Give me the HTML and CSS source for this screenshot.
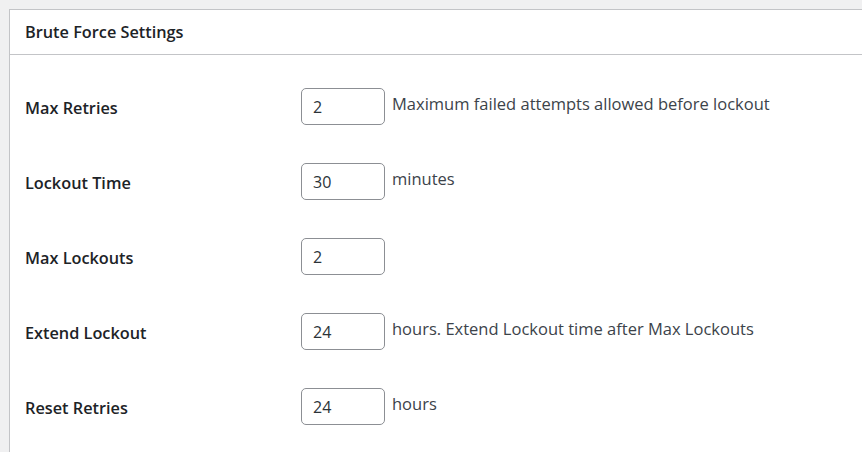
FILE: index.html
```html
<!DOCTYPE html>
<html>
<head>
<meta charset="utf-8">
<link rel="stylesheet" href="styles.css">
</head>
<body>
<div class="panel">
  <div class="panel-header"><h2 class="panel-title">Brute Force Settings</h2></div>
  <div class="panel-body">
    <div class="row">
      <label class="label">Max Retries</label>
      <div class="field"><input class="num" type="text" value="2"><span class="desc">Maximum failed attempts allowed before lockout</span></div>
    </div>
    <div class="row">
      <label class="label">Lockout Time</label>
      <div class="field"><input class="num" type="text" value="30"><span class="desc">minutes</span></div>
    </div>
    <div class="row">
      <label class="label">Max Lockouts</label>
      <div class="field"><input class="num" type="text" value="2"></div>
    </div>
    <div class="row">
      <label class="label">Extend Lockout</label>
      <div class="field"><input class="num" type="text" value="24"><span class="desc">hours. Extend Lockout time after Max Lockouts</span></div>
    </div>
    <div class="row">
      <label class="label">Reset Retries</label>
      <div class="field"><input class="num" type="text" value="24"><span class="desc">hours</span></div>
    </div>
  </div>
</div>
</body>
</html>
```
FILE: styles.css
```css
html, body {
  margin: 0;
  padding: 0;
  background: #f0f0f1;
  font-family: "Open Sans", "Noto Sans", sans-serif;
  color: #1d2327;
}
body {
  padding: 9px 0 0 9px;
  height: 452px;
  box-sizing: border-box;
  overflow: hidden;
}
.panel {
  background: #fff;
  border: 1px solid #c3c4c7;
  border-right: none;
  min-height: 460px;
}
.panel-header {
  height: 44px;
  border-bottom: 1px solid #c3c4c7;
  display: flex;
  align-items: center;
  padding-left: 15px;
}
.panel-title {
  margin: 0;
  font-size: 16.3px;
  font-weight: 600;
  color: #1d2327;
}
.panel-body {
  padding: 14px 0 0 15px;
}
.row {
  display: grid;
  grid-template-columns: 276px 1fr;
  align-items: center;
  padding: 19px 0 19px;
}
.label {
  font-size: 16.3px;
  font-weight: 600;
  color: #1d2327;
  padding-top: 2px;
}
.field {
  display: flex;
  align-items: center;
}
.num {
  box-sizing: border-box;
  width: 84px;
  height: 37px;
  border: 1px solid #8c8f94;
  border-radius: 5px;
  padding: 0 11px;
  font-family: inherit;
  font-size: 16px;
  color: #2c3338;
  background: #fff;
  margin: 0;
  outline: none;
}
.desc {
  margin-left: 7px;
  font-size: 16.5px;
  color: #3c434a;
  margin-top: -6px;
}
```
